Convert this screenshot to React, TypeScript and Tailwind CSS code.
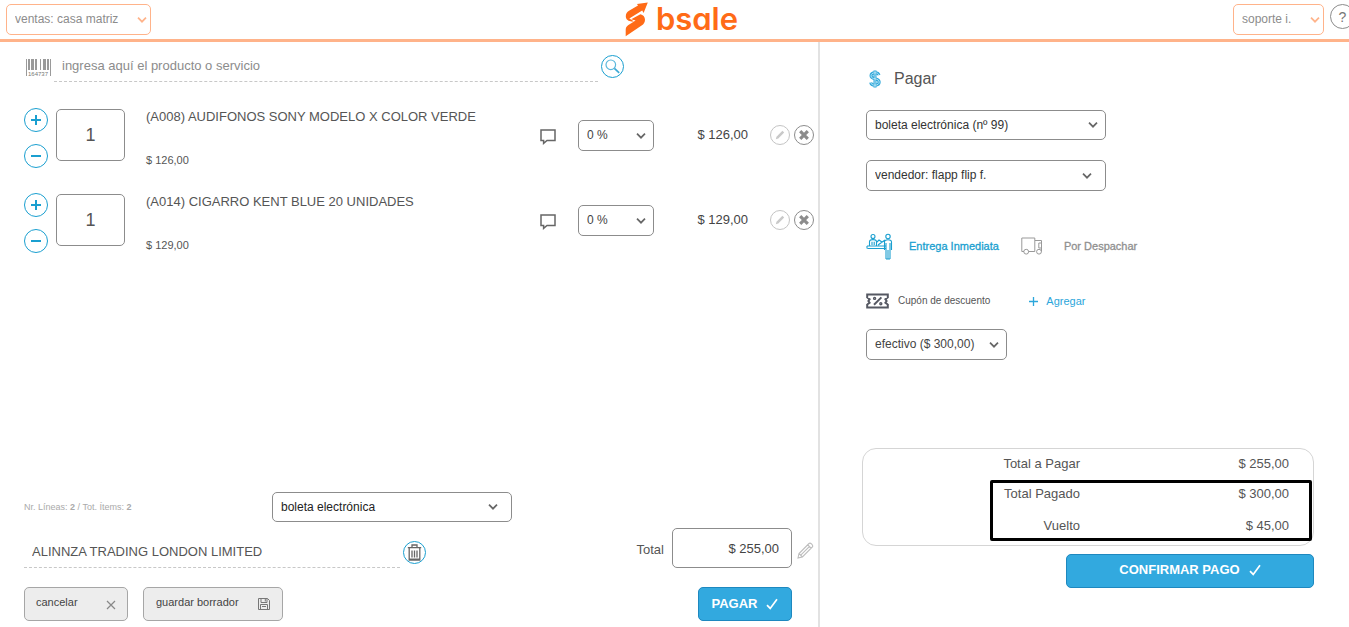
import React from "react";

const box = "rounded-[5px] border border-[#8c8c8c] bg-white";

function Chevron({ className }: { className: string }) {
  return (
    <svg viewBox="0 0 10 7" aria-hidden="true" className={`pointer-events-none absolute top-1/2 h-[7px] w-[10px] -translate-y-1/2 ${className}`}>
      <path d="M1 1.2 5 5.2 9 1.2" fill="none" stroke="currentColor" strokeWidth="1.7" />
    </svg>
  );
}

function Dropdown({ label, value, className, tone, chevron }: { label: string; value: string; className: string; tone: string; chevron: string }) {
  return (
    <div className={`relative ${className}`}>
      <select aria-label={label} defaultValue={value} className={`block w-full appearance-none rounded-[5px] border bg-white pr-6 pb-px pl-2 text-[12px] leading-4 ${tone}`}>
        <option>{value}</option>
      </select>
      <Chevron className={chevron} />
    </div>
  );
}

function Check() {
  return (
    <svg viewBox="0 0 12 12" aria-hidden="true" className="size-3">
      <path d="M1 7.2 4.2 10.4 11 1.2" fill="none" stroke="#fff" strokeWidth="1.7" />
    </svg>
  );
}

function Logo() {
  return (
    <a href="#" aria-label="bsale" className="flex items-center gap-[7px] text-[#ff6b17]">
      <svg viewBox="0 0 24 35" aria-hidden="true" className="h-[35px] w-6 fill-current">
        <path d="M12 2 22.8.6 18.6 11 17.2 8.6 4.3 16.4 8.8 19.2C5.2 20.2.8 18.5.8 14.3.8 11.5 2 9.9 4 8.7L13 3.6Z" />
        <path d="M6.2 17.2 15.4 12.2C18 12.7 20 14.8 20 17.8 20 20.2 18.8 22.2 16.6 23.6L.7 34.3V27.8C.7 25.5 1.7 24 3.4 22.9L10.6 18.5Z" />
      </svg>
      <span className="font-['Inter',sans-serif] text-[31px] leading-[38px] font-semibold [font-feature-settings:'cv11']">bsale</span>
    </a>
  );
}

function Barcode() {
  return (
    <svg viewBox="0 0 25 18" aria-hidden="true" className="h-[18px] w-[25px]">
      <g fill="#9a9a9a">
        <path d="M0 0h1v17H0zM2 0h2v11H2zM5 0h3v11H5zM9 0h2v11H9zM14 0h1v11h-1zM17 0h3v11h-3zM21 0h2v11h-2zM24 0h1v17h-1z" />
      </g>
      <text x="2" y="17" fontSize="6" fill="#777" fontFamily="Liberation Sans, sans-serif">164737</text>
    </svg>
  );
}

function StepButton({ label, plus }: { label: string; plus?: boolean }) {
  return (
    <button type="button" aria-label={label} className="flex size-6 items-center justify-center rounded-full border border-[#1a9fd0] text-[#1a9fd0]">
      <svg viewBox="0 0 12 12" className="size-3">
        <path d={plus ? "M1 6h10M6 1v10" : "M1 6h10"} fill="none" stroke="currentColor" strokeWidth="2" />
      </svg>
    </button>
  );
}

function LineItem({ name, price }: { name: string; price: string }) {
  return (
    <li className="flex h-[85px] items-start">
      <div className="flex w-8 flex-col gap-3">
        <StepButton plus label={`Sumar ${name}`} />
        <StepButton label={`Restar ${name}`} />
      </div>
      <input aria-label={`Cantidad ${name}`} defaultValue="1" className={`mt-px h-[52px] w-[69px] text-center text-[18px] text-[#555] ${box}`} />
      <div className="ml-[21px] flex min-w-0 flex-1 flex-col gap-[26px] text-[#555]">
        <p className="text-[13px] leading-[18px]">{name}</p>
        <p className="text-[11px] leading-4">{price}</p>
      </div>
      <button type="button" aria-label={`Comentar ${name}`} className="mt-5 mr-[22px]">
        <svg viewBox="0 0 16 17" className="h-[17px] w-4">
          <path d="M1 2h14v10.5H7L3.6 15.4V12.5H1Z" fill="none" stroke="#666" strokeWidth="1.5" />
        </svg>
      </button>
      <Dropdown label={`Descuento ${name}`} value="0 %" className="mt-3 w-[76px]" tone="h-[31px] border-[#8c8c8c] text-[#444]" chevron="right-2 text-[#666]" />
      <p className="mt-[18px] w-[94px] text-right text-[13px] leading-[18px] text-[#444]">{price}</p>
      <div className="mt-[17px] mr-1 ml-[22px] flex gap-1">
        <button type="button" aria-label={`Editar ${name}`} className="flex size-5 items-center justify-center rounded-full border border-[#c4c4c4]">
          <svg viewBox="0 0 10 10" className="size-[10px] fill-[#c9c9c9]">
            <path d="M.8 9.2 1.5 6.7 7.4.8 9.2 2.6 3.3 8.5Z" />
          </svg>
        </button>
        <button type="button" aria-label={`Eliminar ${name}`} className="flex size-5 items-center justify-center rounded-full border border-[#8c8c8c]">
          <svg viewBox="0 0 10 10" className="size-[10px]">
            <path d="M1.2 1.2 8.8 8.8M8.8 1.2 1.2 8.8" stroke="#8c8c8c" strokeWidth="3.2" />
          </svg>
        </button>
      </div>
    </li>
  );
}

function SalePanel() {
  return (
    <main className="flex min-w-0 flex-col border-r-2 border-[#e2e2e2] pl-6">
      <form className="mt-3 flex items-center" onSubmit={(e) => e.preventDefault()}>
        <span className="ml-[2px] w-7"><Barcode /></span>
        <input aria-label="Producto o servicio" placeholder="ingresa aquí el producto o servicio" className="h-7 w-[544px] border-b border-dashed border-[#c8c8c8] px-2 pb-1 text-[13px] outline-none placeholder:text-[#8c8c8c]" />
        <button type="submit" aria-label="Buscar" className="mb-1 ml-[3px] flex size-[23px] items-center justify-center rounded-full border border-[#1a9fd0]">
          <svg viewBox="0 0 15 15" className="size-[15px]">
            <circle cx="5.8" cy="5.8" r="4.8" fill="none" stroke="#5cb8dc" strokeWidth="1.2" />
            <path d="m9.4 9.4 4.8 4.4" stroke="#3ca9d5" strokeWidth="1.7" />
          </svg>
        </button>
      </form>
      <ul className="mt-[26px]">
        <LineItem name="(A008) AUDIFONOS SONY MODELO X COLOR VERDE" price="$ 126,00" />
        <LineItem name="(A014) CIGARRO KENT BLUE 20 UNIDADES" price="$ 129,00" />
      </ul>
      <footer className="mt-auto pr-[26px] pb-[6px]">
        <div className="flex items-center">
          <p className="w-[248px] text-[9px] leading-4 text-[#aaa]">
            Nr. Líneas: <b>2</b> / Tot. Ítems: <b>2</b>
          </p>
          <Dropdown label="Tipo de documento" value="boleta electrónica" className="w-[240px]" tone="h-[30px] border-[#8c8c8c] text-[#222]" chevron="right-[14px] text-[#666]" />
        </div>
        <div className="mt-[6px] flex items-center">
          <input aria-label="Cliente" defaultValue="ALINNZA TRADING LONDON LIMITED" className="h-10 w-[376px] border-b border-dashed border-[#c8c8c8] px-2 pt-[7px] text-[13px] text-[#555] outline-none" />
          <button type="button" aria-label="Quitar cliente" className="mt-2 ml-[3px] flex size-[23px] items-center justify-center rounded-full border border-[#1a9fd0]">
            <svg viewBox="0 0 15 17" className="h-[17px] w-[15px] flex-none" fill="none" stroke="#666" strokeWidth="1.3">
              <path d="M.8 3.6h13.4M5 3.2V1h5v2.2M2.2 4v12h10.6V4M5 6.5v7M7.5 6.5v7M10 6.5v7M2.2 15.2h10.6" />
            </svg>
          </button>
          <label htmlFor="total" className="ml-auto pt-[3px] pr-2 text-[13px] leading-4 text-[#555]">Total</label>
          <input id="total" defaultValue="$ 255,00" className={`h-10 w-[120px] px-3 text-right text-[13px] text-[#444] ${box}`} />
          <button type="button" aria-label="Editar total" className="mt-1 -mr-[22px] ml-[5px]">
            <svg viewBox="0 0 17 17" className="size-[17px]" fill="none" stroke="#bdbdbd" strokeWidth="1.1">
              <path d="M1 16 2 11.5 12 1.5C13.5.3 16.6 3.2 15.4 4.9L5.4 14.9ZM2 11.5 5.4 14.9M10.8 2.8l3.3 3.4M4 12.8 12.3 4.6" />
            </svg>
          </button>
        </div>
        <div className="mt-[19px] flex items-start gap-[15px] text-[11px] leading-4 text-[#444]">
          <button type="button" className="flex h-[34px] w-[104px] justify-between rounded-[5px] border border-[#a6a6a6] bg-[#ededed] px-[11px] pt-[6px]">
            cancelar
            <svg viewBox="0 0 10 10" className="mt-[6px] size-[10px]"><path d="m1 1 8 8M9 1 1 9" stroke="#888" strokeWidth="1.2" /></svg>
          </button>
          <button type="button" className="flex h-[34px] w-[140px] justify-between rounded-[5px] border border-[#a6a6a6] bg-[#ededed] px-3 pt-[6px]">
            guardar borrador
            <svg viewBox="0 0 12 12" className="mt-1 size-3" fill="none" stroke="#777" strokeWidth="1"><path d="M.5.5h9l2 2v9H.5ZM3 .5v4h6v-4M7.3 1v2.5M2.5 11.5v-5h7v5M4 8.5h4" /></svg>
          </button>
          <button type="button" className="ml-auto flex h-[34px] w-[94px] items-center justify-center gap-[9px] rounded-[5px] border border-[#1e88bf] bg-[#32a9df] text-[13px] font-bold text-white">
            PAGAR <Check />
          </button>
        </div>
      </footer>
    </main>
  );
}

function PaymentPanel() {
  return (
    <aside className="flex min-w-0 flex-col pr-[35px] pb-[39px] pl-[42px]">
      <div className="flex flex-col items-start pt-[27px] pl-1">
        <h1 className="flex items-center gap-[13px] text-[16px] leading-5 text-[#555]">
          <svg viewBox="0 0 12 18" aria-hidden="true" className="ml-[3px] h-[18px] w-3" fill="none">
            <path d="M10 5.2C9.5 3.5 8 2.8 6 2.8 3.6 2.8 2 4 2 5.8 2 10 10.2 7.6 10.2 12.1 10.2 14 8.4 15.2 6 15.2 3.6 15.2 2 14.2 1.7 12.4M6 .5v17" stroke="#2fa8da" strokeWidth="3" />
            <path d="M10 5.2C9.5 3.5 8 2.8 6 2.8 3.6 2.8 2 4 2 5.8 2 10 10.2 7.6 10.2 12.1 10.2 14 8.4 15.2 6 15.2 3.6 15.2 2 14.2 1.7 12.4M6 1v16" stroke="#d5f0fa" strokeWidth=".8" />
          </svg>
          Pagar
        </h1>
        <Dropdown label="Documento" value="boleta electrónica (nº 99)" className="mt-[21px] w-[240px]" tone="h-[30px] border-[#8c8c8c] text-[#333]" chevron="right-2 text-[#666]" />
        <Dropdown label="Vendedor" value="vendedor: flapp flip f." className="mt-5 w-[240px]" tone="h-[31px] border-[#8c8c8c] text-[#333]" chevron="right-[14px] text-[#666]" />
        <div className="mt-[41px] flex h-7 items-center text-[11px] leading-4">
          <button type="button" className="flex items-center gap-4 text-[#1a9fd0]">
            <svg viewBox="0 0 27 27" className="size-[27px]" fill="none" stroke="currentColor" strokeWidth="1.1">
              <circle cx="7" cy="3.5" r="2" /><circle cx="22" cy="3.5" r="2.2" />
              <path d="M1 13h19M1.5 15.5h19M1 13v2.5M3.5 12.5V8.5C4 6 10 6 10.5 8.5v4M6 12V8.8M8.2 12V8.8M18.5 17V9C18.5 6 25.5 6 25.5 9v8M20 26V10M24 26V10M20 26h4M22 17v9M12 12l7-5M11 9l2-2 3 2 2-1" />
            </svg>
            <span className="[-webkit-text-stroke:0.3px_currentColor]">Entrega Inmediata</span>
          </button>
          <button type="button" className="ml-[22px] flex items-center gap-[21px] text-[#909090]">
            <svg viewBox="0 0 22 18" className="h-[18px] w-[22px]" fill="none" stroke="#999" strokeWidth="1">
              <path d="M3 14.5H.8V1h13v13.5H7.5M14 3.5h6.5v11M17.8 6h2.7v5h-2.7Z" />
              <circle cx="5.2" cy="14.7" r="2.4" /><circle cx="18" cy="14.7" r="2.4" />
            </svg>
            <span className="[-webkit-text-stroke:0.3px_currentColor]">Por Despachar</span>
          </button>
        </div>
        <div className="mt-[33px] flex h-4 items-center leading-4">
          <svg viewBox="0 0 23 16" aria-hidden="true" className="mr-[9px] h-4 w-[23px]" fill="none" stroke="#555862" strokeWidth="2">
            <path d="M1.2 5V1.5h20.6V5M1.2 11v3.5h20.6V11M1.2 4.5 3.6 6.2 2.4 8 3.6 9.8 1.2 11.5M21.8 4.5 19.4 6.2 20.6 8 19.4 9.8 21.8 11.5M8 11.8 15.4 4.4" />
            <circle cx="8.6" cy="5.4" r=".7" /><circle cx="14.8" cy="10.8" r=".7" />
          </svg>
          <span className="text-[10px] text-[#555]">Cupón de descuento</span>
          <button type="button" className="ml-[39px] flex items-center gap-2 text-[11px] text-[#2ba6db]">
            <svg viewBox="0 0 9 9" className="size-[9px]"><path d="M0 4.5h9M4.5 0v9" stroke="currentColor" strokeWidth="1.3" /></svg>
            Agregar
          </button>
        </div>
        <Dropdown label="Forma de pago" value="efectivo ($ 300,00)" className="mt-5 w-[141px]" tone="h-[31px] border-[#8c8c8c] text-[#444]" chevron="right-2 text-[#666]" />
      </div>
      <dl className="mt-auto rounded-[14px] border border-[#d5d5d5] pr-6 pb-[3px] text-right text-[13px] leading-4 text-[#555]">
        <div className="flex h-[29px] items-center justify-end">
          <dt>Total a Pagar</dt>
          <dd className="w-[209px]">$ 255,00</dd>
        </div>
        <div className="relative">
          <div className="flex h-8 items-center justify-end">
            <dt>Total Pagado</dt>
            <dd className="w-[209px]">$ 300,00</dd>
          </div>
          <div className="flex h-8 items-center justify-end">
            <dt>Vuelto</dt>
            <dd className="w-[209px]">$ 45,00</dd>
          </div>
          <div className="absolute top-[2px] -right-[23px] bottom-px w-[322px] rounded-[2px] border-3 border-black" />
        </div>
      </dl>
      <button type="button" className="mt-2 flex h-[34px] w-[248px] items-center justify-center gap-[9px] self-end rounded-[5px] border border-[#1e88bf] bg-[#32a9df] pb-[3px] text-[13px] leading-4 font-bold text-white">
        CONFIRMAR PAGO <Check />
      </button>
    </aside>
  );
}

export default function App() {
  return (
    <div className="flex min-h-screen flex-col overflow-hidden bg-white font-['Liberation_Sans',Arial,sans-serif]">
      <header className="grid h-[42px] grid-cols-[1fr_auto_1fr] items-start border-b-3 border-[#ffb38a]">
        <Dropdown label="Sucursal" value="ventas: casa matriz" className="mt-1 ml-[6px] w-[145px]" tone="h-[31px] border-[#ffb38a] text-[#8c8c8c]" chevron="right-1 text-[#ffb38a]" />
        <div className="pl-[14px]"><Logo /></div>
        <div className="-mr-[6px] flex items-start justify-end gap-[6px] pt-1">
          <Dropdown label="Usuario" value="soporte i." className="w-[91px]" tone="h-[31px] border-[#ffb38a] text-[#8c8c8c]" chevron="right-1 text-[#ffb38a]" />
          <button type="button" aria-label="Ayuda" className="flex size-[25px] items-center justify-center rounded-full border border-[#8c8c8c] text-[14px] leading-4 font-medium text-[#777]">?</button>
        </div>
      </header>
      <div className="grid flex-1 grid-cols-[820fr_529fr]">
        <SalePanel />
        <PaymentPanel />
      </div>
    </div>
  );
}
